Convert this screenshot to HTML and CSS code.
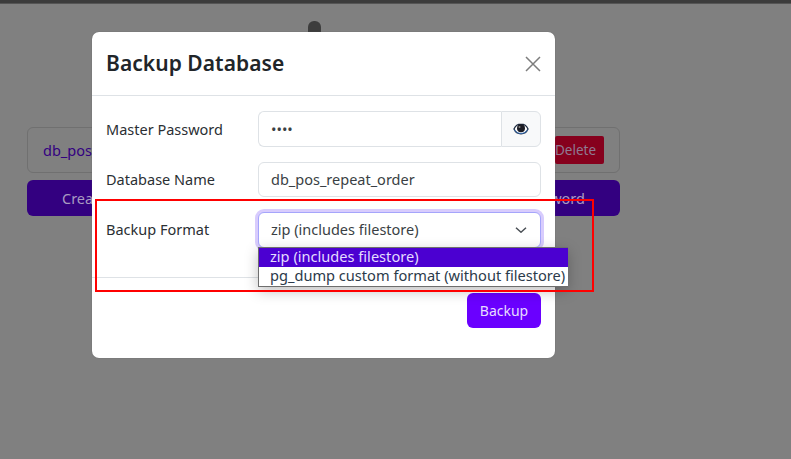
FILE: index.html
```html
<!DOCTYPE html>
<html lang="en">
<head>
<meta charset="utf-8">
<title>Backup Database</title>
<link rel="stylesheet" href="styles.css">
</head>
<body>
<div class="topbar"></div>
<main class="page">
  <div class="logo-stub"></div>
  <div class="db-card">
    <span class="db-name">db_pos_repeat_order</span>
    <span class="db-delete">Delete</span>
  </div>
  <div class="db-actions">
    <span class="db-action">Create Database</span>
    <span class="db-action">Set Master Password</span>
  </div>
</main>
<section class="modal">
  <header class="modal-header">
    <h1 class="modal-title">Backup Database</h1>
    <svg class="close" viewBox="0 0 16 16" width="16" height="16"><path d="M1 1L15 15M15 1L1 15" stroke="#7d7d7d" stroke-width="1.500" fill="none"/></svg>
  </header>
  <div class="modal-body">
    <div class="row">
      <label class="label">Master Password</label>
      <div class="input-group">
        <div class="input input-left">••••</div>
        <div class="addon">
          <svg viewBox="0 0 16 12" width="16" height="12"><path d="M8 1.200C4.800 1.200 2.200 3.200 1 6c1.200 2.800 3.800 4.800 7 4.800s5.800-2 7-4.800c-1.200-2.800-3.800-4.800-7-4.800z" fill="#fff" stroke="#1d2b40" stroke-width="1.300"/><circle cx="8" cy="5.300" r="4" fill="#1c1c24"/><circle cx="6.500" cy="4" r="1" fill="#8a8a8a"/><path d="M1.300 6.700C2.500 9 5 10.400 8 10.400s5.500-1.400 6.700-3.700" stroke="#3a7bd0" stroke-width=".8" fill="none"/></svg>
        </div>
      </div>
    </div>
    <div class="row">
      <label class="label">Database Name</label>
      <div class="input">db_pos_repeat_order</div>
    </div>
    <div class="row row-format">
      <label class="label">Backup Format</label>
      <div class="input select">
        <span>zip (includes filestore)</span>
        <svg viewBox="0 0 12 6" width="12" height="6"><path d="M1 .8L6 5.200 11 .8" stroke="#4a4f55" stroke-width="1.500" fill="none"/></svg>
      </div>
    </div>
  </div>
  <footer class="modal-footer">
    <span class="btn-backup">Backup</span>
  </footer>
</section>
<div class="dropdown">
  <div class="option option-selected">zip (includes filestore)</div>
  <div class="option">pg_dump custom format (without filestore)</div>
</div>
<div class="annotation"></div>
</body>
</html>
```

FILE: styles.css
```css
* { box-sizing: border-box; }
html, body { margin: 0; height: 100%; }
body {
  width: 791px;
  height: 459px;
  overflow: hidden;
  background: #808080;
  font-family: "Noto Sans", "Open Sans", sans-serif;
  font-size: 14.5px;
  color: #212529;
  position: relative;
}
.topbar { height: 4px; background: #3c3c3c; border-bottom: 1px solid #555; }
.page { width: 593px; margin-left: 27px; position: relative; display: flex; flex-direction: column; padding-top: 123px; }
.logo-stub { position: absolute; left: 281px; top: 17px; width: 13px; height: 20px; border-radius: 6px; background: #3d3d3d; }
.db-card {
  height: 46px;
  border: 1px solid #707070;
  border-radius: 6px;
  display: flex;
  align-items: center;
  justify-content: space-between;
  padding: 0 15px;
}
.db-name { color: #330080; }
.db-delete { background: #86001d; color: #8f7a92; height: 28px; width: 49px; border-radius: 2px; display: flex; align-items: center; justify-content: flex-end; padding-right: 8px; font-size: 13.5px; }
.db-actions { display: flex; justify-content: space-between; margin-top: 7px; gap: 8px; }
.db-action {
  flex: 1;
  height: 36px;
  background: #330080;
  color: #a89ac0;
  border-radius: 6px;
  display: flex;
  align-items: center;
  padding: 0 35px;
}
.db-action:last-child { justify-content: flex-end; }
.modal {
  position: absolute;
  left: 92px;
  top: 32px;
  width: 463px;
  height: 326px;
  background: #fff;
  border-radius: 7px;
  box-shadow: 0 0 1px #555;
  display: flex;
  flex-direction: column;
}
.modal-header {
  height: 64px;
  border-bottom: 1px solid #dee2e6;
  display: flex;
  align-items: center;
  justify-content: space-between;
  padding: 0 14px;
}
.modal-title { margin: 0; font-size: 21px; font-weight: 600; line-height: 1; letter-spacing: .05px; color: #212529; }
.modal-body { height: 182px; padding: 15px 14px 0; display: flex; flex-direction: column; gap: 15px; border-bottom: 1px solid #dee2e6; }
.row { display: flex; align-items: center; height: 35.5px; }
.label { width: 152px; flex: none; color: #2b2f33; }
.row-format .label, .row-format .select span { margin-bottom: 2px; }
.input {
  width: 283px;
  height: 35.5px;
  border: 1px solid #dee2e6;
  border-radius: 6px;
  background: #fff;
  padding: 0 12px;
  display: flex;
  align-items: center;
  color: #3a3f44;
}
.input-group { display: flex; width: 283px; }
.input-left { flex: 1; width: auto; border-radius: 6px 0 0 6px; border-right: 0; }
.addon {
  width: 40px;
  height: 35.5px;
  border: 1px solid #dee2e6;
  border-radius: 0 6px 6px 0;
  background: #f8f9fa;
  display: flex;
  align-items: center;
  justify-content: center;
}
.select {
  justify-content: space-between;
  border-color: #a5a5fb;
  box-shadow: 0 0 0 3px #d8ccfd;
  padding-right: 13px;
}
.modal-footer { display: flex; justify-content: flex-end; padding: 15px 14px 0; }
.btn-backup {
  width: 74px;
  height: 35px;
  background: #6a00ff;
  color: #e6dcff;
  border-radius: 6px;
  display: flex;
  align-items: center;
  justify-content: center;
  font-size: 14px;
}
.dropdown {
  position: absolute;
  left: 258px;
  top: 247px;
  width: 310px;
  height: 40px;
  background: #fff;
  border: 1px solid #6e6e6e;
  border-right: 0;
  box-shadow: 0 4px 14px rgba(0,0,0,.25);
  font-size: 14.6px;
  line-height: 16px;
}
.option { height: 19px; padding-left: 11px; white-space: nowrap; color: #2b3a4a; }
.option-selected { background: #4b00d1; color: #e4dcff; }
.annotation {
  position: absolute;
  left: 95px;
  top: 199px;
  width: 499px;
  height: 93px;
  border: 2px solid #f00;
}
```
